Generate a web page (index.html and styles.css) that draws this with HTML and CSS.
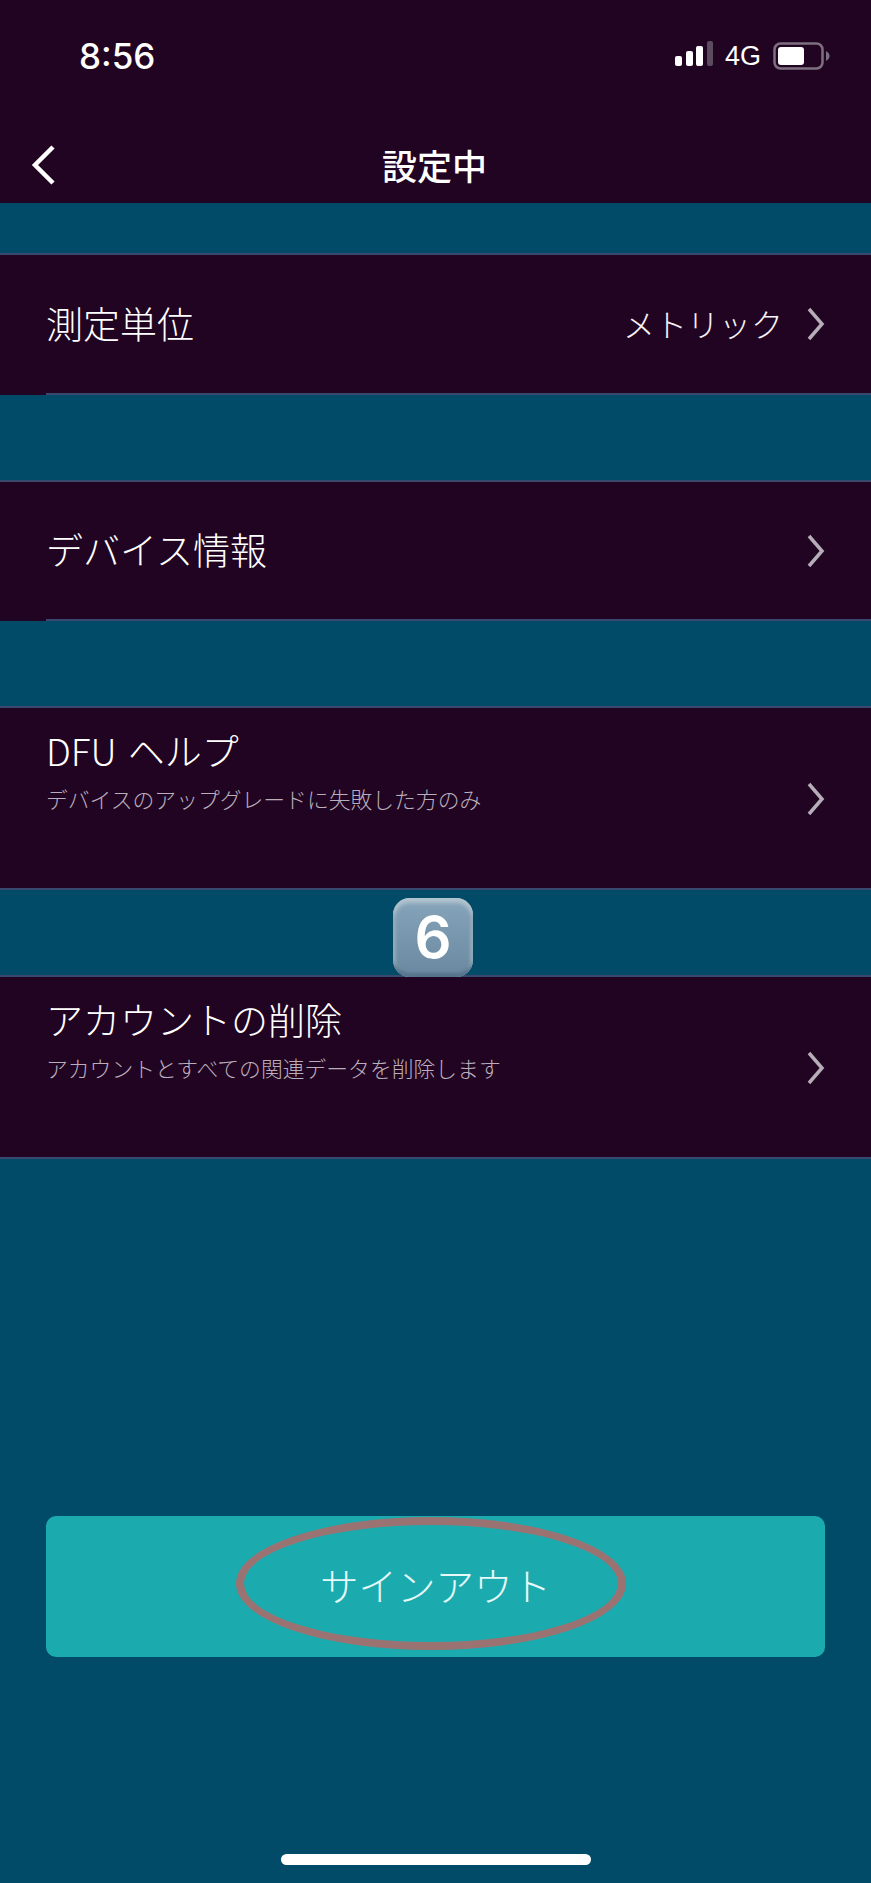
FILE: index.html
```html
<!DOCTYPE html>
<html lang="ja">

<head>
    <meta charset="utf-8">
    <title>設定中</title>
    <link rel="stylesheet" href="styles.css">
</head>

<body>
    <div class="status">
        <span class="time">8:56</span>
        <div class="status-right">
            <svg class="signal" width="40" height="26" viewBox="0 0 40 26">
                <rect x="0" y="15" width="7" height="10" rx="2" fill="#fff"/>
                <rect x="11" y="10" width="7" height="15" rx="2" fill="#fff"/>
                <rect x="21" y="5" width="7" height="20" rx="2" fill="#fff"/>
                <rect x="32" y="0" width="6" height="25" rx="2" fill="#5b4c5e"/>
            </svg>
            <span class="net">4G</span>
            <svg class="battery" width="57" height="28" viewBox="0 0 57 28">
                <rect x="1.5" y="1.5" width="48" height="25" rx="6" fill="none" stroke="#7d6f80" stroke-width="2.5"/>
                <rect x="5" y="5" width="26" height="18" rx="3" fill="#fff"/>
                <path d="M53 9 C55.500 10.500 56.500 12 56.500 14 C56.500 16 55.500 17.500 53 19 Z" fill="#7d6f80"/>
            </svg>
        </div>
    </div>

    <div class="nav">
        <svg class="back" width="26" height="40" viewBox="0 0 26 40">
            <path d="M22 2 L4 20 L22 38" fill="none" stroke="#fff" stroke-width="4.500"/>
        </svg>
        <span class="nav-title">設定中</span>
    </div>

    <div class="gap gap-first"></div>

    <div class="row">
        <div class="row-inner row-single row-one">
            <span class="row-title">測定単位</span>
            <span class="row-value">メトリック</span>
            <svg class="chev" width="18" height="34" viewBox="0 0 18 34">
                <path d="M2 2 L15 17 L2 32" fill="none" stroke="#b5adb8" stroke-width="3.500"/>
            </svg>
        </div>
    </div>

    <div class="gap gap-short"></div>

    <div class="row">
        <div class="row-inner row-single">
            <span class="row-title">デバイス情報</span>
            <svg class="chev" width="18" height="34" viewBox="0 0 18 34">
                <path d="M2 2 L15 17 L2 32" fill="none" stroke="#b5adb8" stroke-width="3.500"/>
            </svg>
        </div>
    </div>

    <div class="gap gap-short"></div>

    <div class="row row-tall">
        <div class="row-inner">
            <div class="row-text">
                <div class="row-title row-title-spaced">DFU ヘルプ</div>
                <div class="row-sub">デバイスのアップグレードに失敗した方のみ</div>
            </div>
            <svg class="chev chev-low" width="18" height="34" viewBox="0 0 18 34">
                <path d="M2 2 L15 17 L2 32" fill="none" stroke="#b5adb8" stroke-width="3.500"/>
            </svg>
        </div>
    </div>

    <div class="gap gap-short gap-badge">
        <div class="keycap">6</div>
    </div>

    <div class="row row-tall">
        <div class="row-inner">
            <div class="row-text">
                <div class="row-title">アカウントの削除</div>
                <div class="row-sub">アカウントとすべての関連データを削除します</div>
            </div>
            <svg class="chev chev-low" width="18" height="34" viewBox="0 0 18 34">
                <path d="M2 2 L15 17 L2 32" fill="none" stroke="#b5adb8" stroke-width="3.500"/>
            </svg>
        </div>
    </div>

    <div class="bottom">
        <div class="signout">
            <span class="signout-text">サインアウト</span>
            <div class="circle"></div>
        </div>
        <div class="home-bar"></div>
    </div>
</body>

</html>
```

FILE: styles.css
```css
* {
    box-sizing: border-box;
}

html,
body {
    margin: 0;
    padding: 0;
}

body {
    width: 871px;
    height: 1883px;
    overflow: hidden;
    display: flex;
    flex-direction: column;
    background: #014b68;
    color: #fff;
    font-family: "Noto Sans CJK JP", "Liberation Sans", sans-serif;
}

.status {
    height: 110px;
    padding: 36px 41px 0 79px;
    display: flex;
    justify-content: space-between;
    align-items: flex-start;
    background: #210422;
}

.time {
    font-family: Inter, "Liberation Sans", sans-serif;
    font-size: 35px;
    font-weight: 500;
    line-height: 41px;
}

.status-right {
    display: flex;
    align-items: flex-start;
    padding-top: 6px;
}

.signal {
    margin-top: -1px;
}

.net {
    font-family: "Liberation Sans", sans-serif;
    font-size: 27px;
    line-height: 28px;
    margin-left: 10px;
    margin-right: 12px;
}

.nav {
    position: relative;
    height: 93px;
    background: #210422;
    display: flex;
    justify-content: center;
}

.back {
    position: absolute;
    left: 31px;
    top: 35px;
}

.nav-title {
    font-size: 35px;
    font-weight: 500;
    line-height: 40px;
    margin-top: 35px;
    margin-right: 2px;
}

.gap {
    height: 86px;
}

.gap-first {
    height: 50px;
}

.gap-short {
    height: 85px;
}

.row {
    padding-left: 46px;
    background: #210422;
    border-top: 2px solid #38486f;
}

.row-inner {
    display: flex;
    padding-right: 46px;
}

.row-single {
    height: 139px;
    align-items: center;
    border-bottom: 2px solid #38486f;
}

.row-one {
    height: 140px;
}

.row-title {
    font-size: 37px;
    line-height: 44px;
    font-weight: 300;
    color: #fff;
}

.row-title-spaced {
    word-spacing: 3px;
}

.row-single .row-title {
    flex: 1;
    margin-top: -3px;
}

.row-value {
    font-size: 32px;
    line-height: 44px;
    font-weight: 300;
    color: #f6f2f6;
    margin-top: -3px;
    margin-right: 24px;
}

.row-tall {
    height: 184px;
    border-bottom: 2px solid #38486f;
}

.row-tall .row-inner {
    justify-content: space-between;
}

.row-text {
    padding-top: 20px;
}

.row-sub {
    font-size: 21.800px;
    line-height: 30px;
    font-weight: 300;
    margin-top: 12px;
    color: #baaebb;
}

.chev {
    flex: none;
}

.chev-low {
    margin-top: 74px;
}

.gap-badge {
    position: relative;
}

.keycap {
    position: absolute;
    left: 393px;
    top: 8px;
    width: 80px;
    height: 79px;
    z-index: 2;
    border-radius: 17px;
    background: linear-gradient(#86a4ba, #6a889f);
    box-shadow: inset 0 5px 4px #b2c4cf, inset 0 -4px 3px #56758c, inset 3px 0 3px #8fa8b9, inset -3px 0 3px #8fa8b9;
    font-family: Inter, "Liberation Sans", sans-serif;
    font-size: 58px;
    font-weight: 600;
    line-height: 79px;
    text-align: center;
}

.bottom {
    flex: 1;
    display: flex;
    flex-direction: column;
    align-items: center;
    padding-top: 357px;
}

.signout {
    position: relative;
    width: 779px;
    height: 141px;
    border-radius: 10px;
    background: #1babaf;
    display: flex;
    align-items: center;
    justify-content: center;
    font-size: 38.500px;
    line-height: 44px;
    font-weight: 300;
    color: #e6f8f8;
}

.signout-text {
    margin-top: -6px;
}

.circle {
    position: absolute;
    left: 190px;
    top: 1px;
    width: 390px;
    height: 133px;
    border: 8px solid #9b7272;
    border-radius: 50%;
}

.home-bar {
    width: 310px;
    height: 11px;
    margin-top: 197px;
    border-radius: 6px;
    background: #fff;
}
```
